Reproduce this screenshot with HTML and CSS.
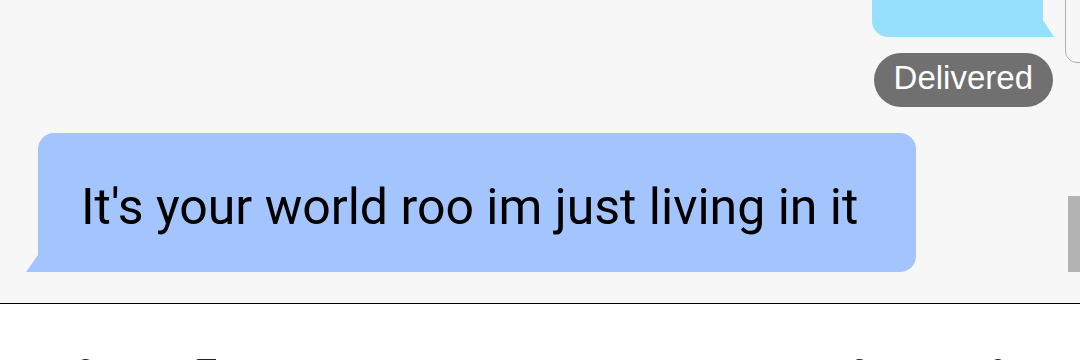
FILE: index.html
```
<!DOCTYPE html>
<html lang="en">
<head>
    <meta charset="UTF-8">
    <meta name="viewport" content="width=device-width, initial-scale=1.0">
    <title>Messages</title>
    <link rel="stylesheet" href="styles.css">
</head>
<body>
    <div class="chat">
        <div class="messages">
            <div class="bubble outgoing"></div>
            <div class="status">Delivered</div>
            <div class="bubble incoming">It's your world roo im just living in it</div>
        </div>
        <div class="side-panel"></div>
        <div class="scroll-thumb"></div>
    </div>

    <div class="composer">
        <div class="tools-left">
            <span class="icon icon-round"></span>
            <span class="icon icon-flat"></span>
        </div>
        <div class="tools-right">
            <span class="icon icon-round"></span>
            <span class="icon icon-round icon-small"></span>
        </div>
    </div>
</body>
</html>
```

FILE: styles.css
```
* { margin: 0; padding: 0; box-sizing: border-box; }
body { width: 1080px; height: 360px; overflow: hidden; background: #fff; font-family: Roboto, "Liberation Sans", sans-serif; }

.chat { position: relative; height: 304px; background: #f7f7f7; border-bottom: 1px solid #000; overflow: hidden; }
.messages { display: flex; flex-direction: column; }

.bubble { position: relative; }
.bubble.outgoing { align-self: flex-end; width: 171px; height: 80px; margin-top: -43px; margin-right: 37px; background: #96e0fe; border-radius: 16px 16px 0 16px; }
.bubble.outgoing::after { content: ""; position: absolute; right: -11px; bottom: 0; width: 11px; height: 17px; background: #96e0fe; clip-path: polygon(0 0, 100% 100%, 0 100%); }

.status { align-self: flex-end; margin-top: 16px; margin-right: 27px; padding: 0 20px 4px; height: 54px; line-height: 50px; border-radius: 27px; background: #707070; color: #fff; font-family: "Liberation Sans", Arial, sans-serif; font-size: 33px; }

.bubble.incoming { align-self: flex-start; margin-top: 26px; margin-left: 38px; padding: 45px 58px 36px 43px; background: #a3c4fc; color: #000; font-size: 50px; line-height: 58px; border-radius: 16px 16px 16px 0; }
.bubble.incoming::before { content: ""; position: absolute; left: -12px; bottom: 0; width: 12px; height: 17px; background: #a3c4fc; clip-path: polygon(100% 0, 100% 100%, 0 100%); }

.side-panel { position: absolute; left: 1065px; top: -20px; width: 60px; height: 83px; border: 1px solid #b0b0b0; border-radius: 12px; }
.scroll-thumb { position: absolute; right: 0; top: 196px; width: 12px; height: 76px; background: #b3b3b3; }

.composer { display: flex; justify-content: space-between; padding: 55px 75px 0 77px; }
.tools-left, .tools-right { display: flex; align-items: flex-start; }
.tools-left { gap: 101px; }
.tools-right { gap: 123px; }
.icon { display: block; width: 17px; height: 17px; border: 3px solid #222; }
.icon-round { border-radius: 50%; }
.icon-flat { width: 21px; border-radius: 4px 0 0 0; border-width: 3px 0 0 0; }
.icon-small { width: 14px; height: 14px; }
```
